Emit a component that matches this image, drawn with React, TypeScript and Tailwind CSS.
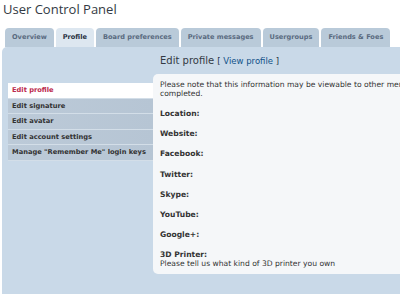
import React from 'react';

const tabs = ['Overview', 'Profile', 'Board preferences', 'Private messages', 'Usergroups', 'Friends & Foes'];
const menu = ['Edit profile', 'Edit signature', 'Edit avatar', 'Edit account settings', 'Manage "Remember Me" login keys'];
const fields = ['Location:', 'Website:', 'Facebook:', 'Twitter:', 'Skype:', 'YouTube:', 'Google+:'];

export default function App() {
    return (
        <div className="w-[400px] h-[294px] overflow-hidden bg-white font-['DejaVu_Sans',sans-serif]">
            <h2 className="pl-[3px] h-[28px] font-['Open_Sans',sans-serif] text-[13px] leading-[18px] text-[#333a44]">User Control Panel</h2>

            <div className="flex gap-[2px] pl-[5px] h-[19px]">
                {tabs.map((t) => (
                    <div
                        key={t}
                        className={
                            'px-[7px] rounded-t-[4px] text-[6.6px] font-bold leading-[19px] whitespace-nowrap ' +
                            (t === 'Profile' ? 'bg-[#dde7f0] text-[#28313f]' : 'bg-[#b9cad9] text-[#5a6a80]')
                        }
                    >
                        {t}
                    </div>
                ))}
            </div>

            <div className="ml-[2px] h-[247px] bg-[#c9d9e8] rounded-tl-[5px] flex">
                <ul className="w-[145px] ml-[6px] mt-[36px] shrink-0">
                    {menu.map((m, i) => (
                        <li
                            key={m}
                            className={
                                'h-[15.6px] pl-[4px] text-[6.7px] font-bold leading-[15.6px] whitespace-nowrap border-b border-[#d3dee8] ' +
                                (i === 0
                                    ? 'bg-white text-[#bc2a4d]'
                                    : 'bg-gradient-to-r from-[#bccad8] to-[#b6c5d4] text-[#333]')
                            }
                        >
                            {m}
                        </li>
                    ))}
                </ul>

                <div className="flex-1 min-w-0">
                    <h2 className="pl-[7px] pt-[7px] h-[27px] text-[10px] leading-[14px] text-[#333a44] whitespace-nowrap">
                        Edit profile <span className="text-[8.5px] text-[#28313f]">[ <span className="text-[#105289]">View profile</span> ]</span>
                    </h2>
                    <div className="w-[260px] bg-[#f5f7f9] rounded-[5px] pl-[7px] pt-[7px] pb-[6px] text-[7.6px] text-[#333]">
                        <p className="leading-[8.5px] whitespace-nowrap">
                            Please note that this information may be viewable to other members.
                            <br />
                            completed.
                        </p>
                        <div className="mt-[12px] flex flex-col gap-[11.7px]">
                            {fields.map((f) => (
                                <div key={f} className="font-bold leading-[8.5px]">{f}</div>
                            ))}
                            <div className="leading-[8.5px]">
                                <div className="font-bold">3D Printer:</div>
                                <div>Please tell us what kind of 3D printer you own</div>
                            </div>
                        </div>
                    </div>
                </div>
            </div>
        </div>
    );
}
